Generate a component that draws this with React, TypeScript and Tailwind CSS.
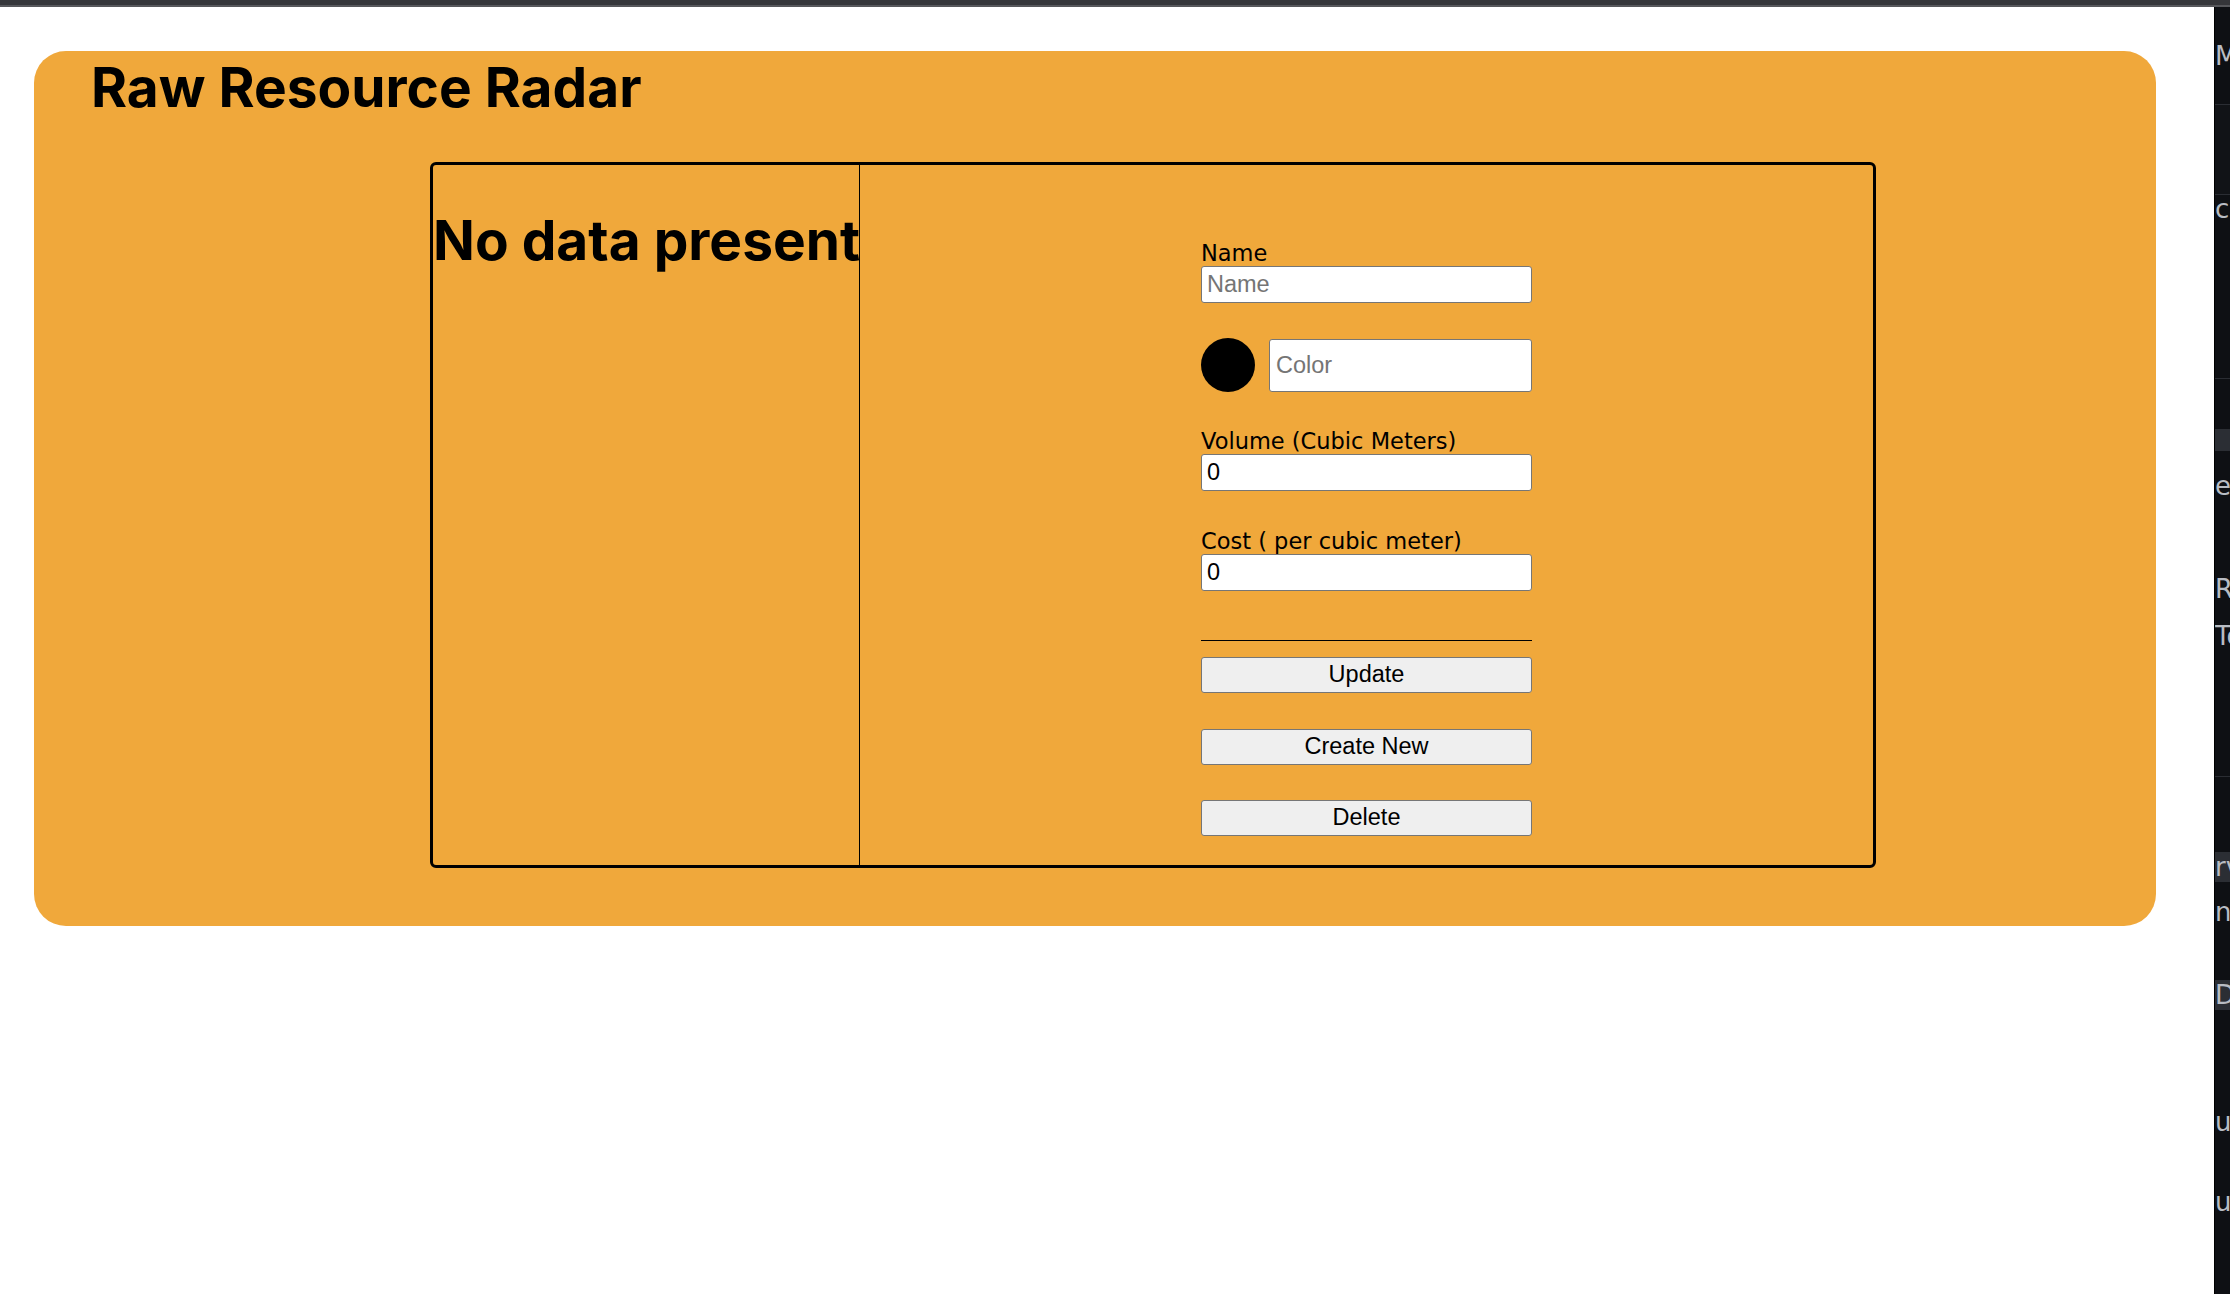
import React from "react";

function Field({ label, value, mt }: { label: string; value: string; mt: string }) {
  return (
    <div className={`flex flex-col ${mt}`}>
      <label className="font-['DejaVu_Sans',sans-serif] text-[22.5px] leading-[26px] text-black whitespace-nowrap">{label}</label>
      <input
        readOnly
        value={value}
        className="h-[37px] w-full bg-white border border-[#767676] rounded-[3px] pl-[5px] font-['Liberation_Sans',Arial,sans-serif] text-[23.5px] text-black outline-none"
      />
    </div>
  );
}

function Btn({ children, mt }: { children: React.ReactNode; mt: string }) {
  return (
    <button
      type="button"
      className={`${mt} h-[36px] w-full bg-[#efefef] border border-[#767676] rounded-[3px] font-['Liberation_Sans',Arial,sans-serif] text-[23.5px] leading-none text-black`}
    >
      {children}
    </button>
  );
}

function Frag({ text, h, gray }: { text: string; h: string; gray?: boolean }) {
  return (
    <div className={`${h} flex items-center shrink-0`}>
      <span
        className={`whitespace-nowrap font-['DejaVu_Sans',sans-serif] text-[26px] leading-[30px] text-[#b8bcc3] ${gray ? "bg-[#2b2e34]" : ""}`}
      >
        {text}
      </span>
    </div>
  );
}

export default function App() {
  return (
    <div className="w-[2230px] h-[1294px] bg-white flex flex-col overflow-hidden">
      <div className="h-[5px] bg-[#35363a] shrink-0" />
      <div className="h-[2px] bg-[#56575b] shrink-0" />
      <div className="flex flex-1 min-h-0">
        <main className="flex-1 pl-[34px] pt-[44px]">
          <section className="w-[2122px] h-[875px] bg-[#f0a83b] rounded-[32px] pt-[3px]">
            <h1 className="pl-[57px] font-['Inter',sans-serif] font-bold text-[55px] leading-[66px] text-black">
              Raw Resource Radar
            </h1>
            <div className="ml-[396px] mt-[42px] w-[1446px] h-[706px] border-[3px] border-black rounded-[6px] flex">
              <div className="w-[427px] shrink-0 border-r border-black pt-[42px] overflow-hidden">
                <h2 className="font-['Inter',sans-serif] font-bold text-[55px] leading-[66px] text-black whitespace-nowrap">
                  No data present
                </h2>
              </div>
              <div className="flex-1 flex flex-col items-center pt-[75px]">
                <form className="w-[331px] flex flex-col">
                  <div className="flex flex-col">
                    <label className="font-['DejaVu_Sans',sans-serif] text-[22.5px] leading-[26px] text-black">Name</label>
                    <input
                      readOnly
                      placeholder="Name"
                      className="h-[37px] w-full bg-white border border-[#767676] rounded-[3px] pl-[5px] font-['Liberation_Sans',Arial,sans-serif] text-[23.5px] text-black placeholder:text-[#757575] outline-none"
                    />
                  </div>
                  <div className="mt-[35px] flex items-center gap-[14px]">
                    <div className="w-[54px] h-[54px] rounded-full bg-black shrink-0" />
                    <input
                      readOnly
                      placeholder="Color"
                      className="h-[53px] flex-1 min-w-0 bg-white border border-[#767676] rounded-[3px] pl-[6px] font-['Liberation_Sans',Arial,sans-serif] text-[23.5px] text-black placeholder:text-[#757575] outline-none"
                    />
                  </div>
                  <Field label="Volume (Cubic Meters)" value="0" mt="mt-[36px]" />
                  <Field label="Cost ( per cubic meter)" value="0" mt="mt-[37px]" />
                  <div className="mt-[49px] h-px bg-black" />
                  <Btn mt="mt-[16px]">Update</Btn>
                  <Btn mt="mt-[36px]">Create New</Btn>
                  <Btn mt="mt-[35px]">Delete</Btn>
                </form>
              </div>
            </div>
          </section>
        </main>
        <aside className="w-[16px] shrink-0 bg-[#0e1014] border-l border-black overflow-hidden flex flex-col">
          <Frag text="Mo" h="h-[97px]" />
          <div className="h-px bg-[#2a2d33] shrink-0" />
          <div className="h-[89px] bg-[#111317] shrink-0" />
          <div className="h-px bg-[#2a2d33] shrink-0" />
          <Frag text="co" h="h-[28px]" />
          <div className="h-[155px] shrink-0" />
          <div className="h-px bg-[#2a2d33] shrink-0" />
          <div className="h-[50px] shrink-0" />
          <div className="h-[22px] bg-[#2b2e34] shrink-0" />
          <Frag text="ex" h="h-[70px]" />
          <div className="h-[46px] shrink-0" />
          <Frag text="Re" h="h-[44px]" />
          <Frag text="To" h="h-[50px]" />
          <div className="h-[115px] shrink-0" />
          <div className="h-px bg-[#2a2d33] shrink-0" />
          <div className="h-[70px] shrink-0" />
          <Frag text="rv" h="h-[40px]" gray />
          <Frag text="nt" h="h-[50px]" />
          <div className="h-[41px] shrink-0" />
          <Frag text="DM" h="h-[34px]" gray />
          <div className="h-[90px] shrink-0" />
          <Frag text="ur" h="h-[40px]" />
          <div className="h-[40px] shrink-0" />
          <Frag text="ue" h="h-[40px]" />
        </aside>
      </div>
    </div>
  );
}
